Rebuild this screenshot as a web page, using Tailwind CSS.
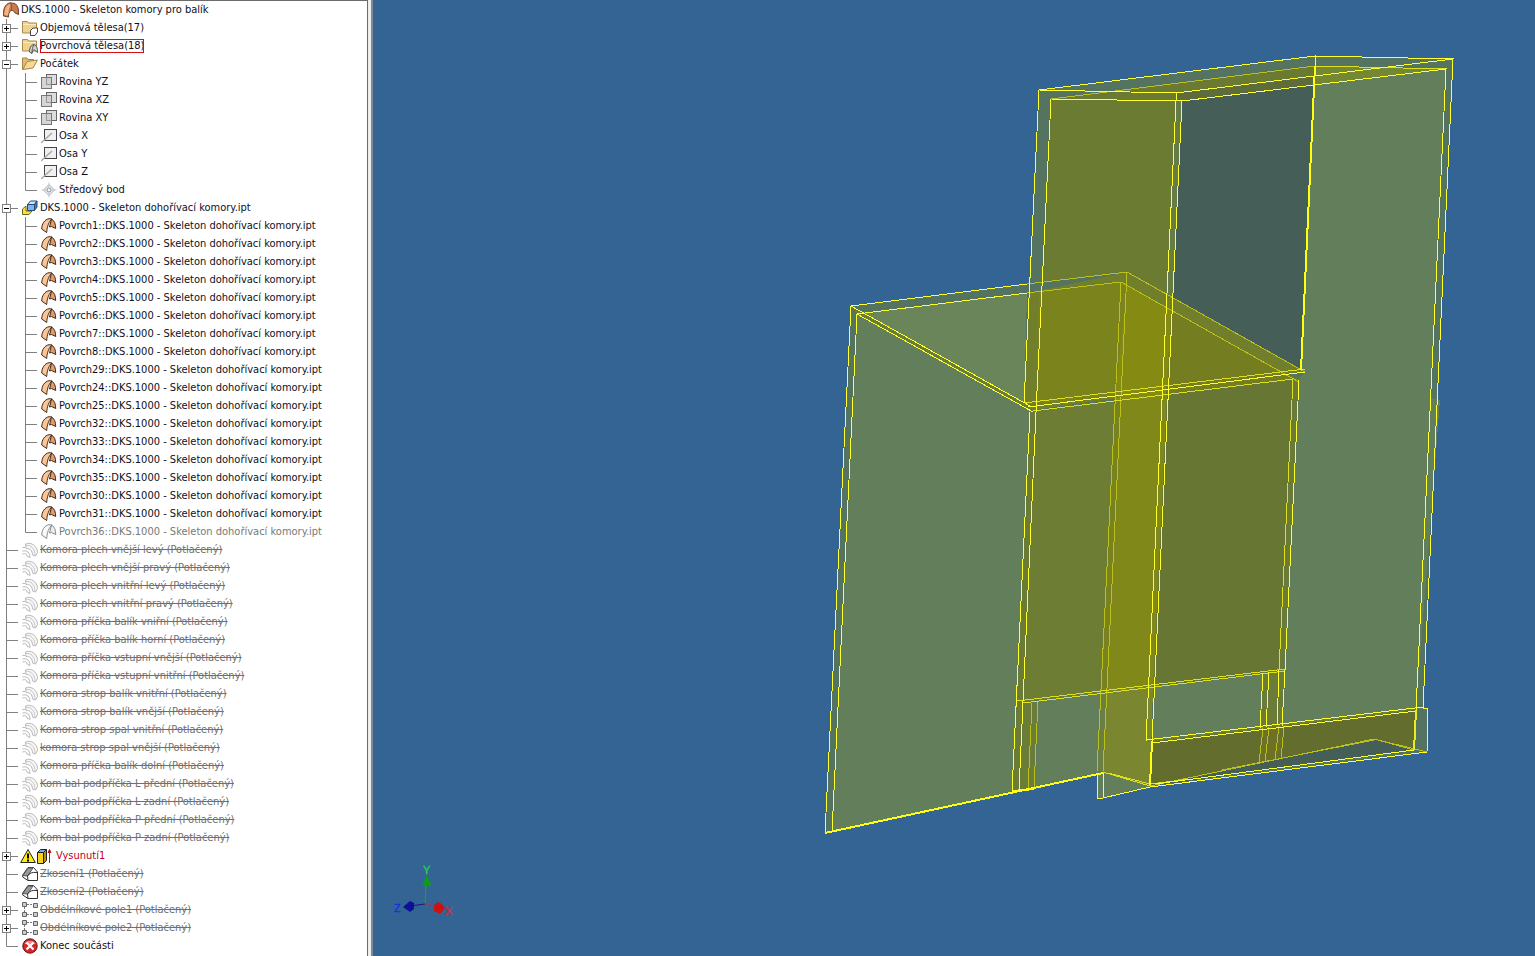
<!DOCTYPE html>
<html lang="cs">
<head>
    <meta charset="UTF-8">
    <meta name="viewport" content="width=device-width, initial-scale=1">
    <title>DKS.1000 - Skeleton komory pro balík</title>
    <script src="https://cdn.jsdelivr.net/npm/@tailwindcss/browser@4"></script>
</head>
<body class="flex min-h-screen bg-[#336494] font-['DejaVu_Sans_Condensed','DejaVu_Sans',sans-serif] text-[11px] leading-[18px] text-[#10101c]">

    <!-- Icons -->
    <svg class="hidden">
        <!-- tree guides -->
        <symbol id="pass" viewBox="0 0 19 18"><path d="M6.5 0V18" stroke="#808080"/></symbol>
        <symbol id="tee" viewBox="0 0 22 18"><path d="M6.5 0V18M6 9.500H18" stroke="#808080"/></symbol>
        <symbol id="end" viewBox="0 0 22 18"><path d="M6.5 0V9.500H18" fill="none" stroke="#808080"/></symbol>
        <symbol id="plus" viewBox="0 0 22 18"><path d="M6.5 0V18M6 9.500H18" stroke="#808080"/><rect x="2.500" y="5.500" width="8" height="8" fill="#fff" stroke="#808080"/><path d="M4 9.500H9M6.500 7V12" stroke="#000"/></symbol>
        <symbol id="minus" viewBox="0 0 22 18"><path d="M6.5 0V18M6 9.500H18" stroke="#808080"/><rect x="2.500" y="5.500" width="8" height="8" fill="#fff" stroke="#808080"/><path d="M4 9.500H9" stroke="#000"/></symbol>

        <symbol id="part" viewBox="0 0 16 16"><path d="M.5 14C0 7 2 2 7 .8L12 1.500C15 3.500 16 8 15.500 12.500L12 11C11 9 9.500 8 8 8.500C6 9.500 5.500 12 5.500 15Z" fill="#c97b4e" stroke="#6d4530"/><path d="M1.500 13C1.500 7 3 3 7.500 2L6 7.500L5 13.500Z" fill="#f3b283"/><path d="M7.500 1.500C9 3 9 6 8 8" stroke="#8a5235" fill="none"/></symbol>
        <symbol id="surface" viewBox="0 0 16 16"><path d="M10.500 1C13.500 2.500 14.700 6 14.700 10.500L10.500 8.500L8.500 9Z" fill="#e39a66" stroke="#3f2a1c" stroke-linejoin="round"/><path d="M.7 11C.8 6 3.500 1.500 8 .7L11 1C8 3.500 6 8.500 5.700 14.500Z" fill="#fbc697" stroke="#3f2a1c" stroke-linejoin="round"/></symbol>
        <symbol id="surface-off" viewBox="0 0 16 16"><path d="M10.500 1C13.500 2.500 14.700 6 14.700 10.500L10.500 8.500L8.500 9Z" fill="#eee" stroke="#8a8a8a" stroke-linejoin="round"/><path d="M.7 11C.8 6 3.500 1.500 8 .7L11 1C8 3.500 6 8.500 5.700 14.500Z" fill="#f8f8f8" stroke="#8a8a8a" stroke-linejoin="round"/></symbol>
        <symbol id="solids" viewBox="0 0 16 16"><path d="M.5 13V1.500H5.500L6.500 3H14.500V13Z" fill="#f1d28b" stroke="#a88a4c"/><path d="M1 4.500H14" stroke="#fbebc0"/><path d="M8.500 10.500L11 8H15.500V12L13 15.500H8.500Z" fill="#fff" stroke="#444"/></symbol>
        <symbol id="surfaces" viewBox="0 0 16 16"><path d="M.5 13V1.500H5.500L6.500 3H14.500V13Z" fill="#f1d28b" stroke="#a88a4c"/><path d="M1 4.500H14" stroke="#fbebc0"/><path d="M7.500 14C7.500 9.500 9 7 12 6.500C15 7.500 15.500 10 15.500 14.500L12.500 12C11 12 10.500 13 10 15.500Z" fill="#ccd3dc" stroke="#555"/><path d="M12 7C10.500 9 10 12 10 15" stroke="#555" fill="none"/></symbol>
        <symbol id="folder" viewBox="0 0 16 16"><path d="M.5 13.500V2H5L6 3.500H11.500V6" fill="#e2bd72" stroke="#a38347"/><path d="M.8 13.500L5 5.500L15.500 4L11 12Z" fill="#f6d995" stroke="#a38347"/></symbol>
        <symbol id="plane" viewBox="0 0 16 16"><rect x="5.500" y=".5" width="10" height="10" fill="#ddd" stroke="#666"/><rect x=".5" y="3.500" width="10" height="11" fill="#cfcfcf" fill-opacity=".85" stroke="#777"/><path d="M5.500 4V10.500H10" stroke="#999" fill="none"/></symbol>
        <symbol id="axis" viewBox="0 0 16 16"><rect x="3.500" y="1.500" width="12" height="11" fill="#f0f0f2" stroke="#444"/><path d="M0 15L11 5" stroke="#aaa" stroke-width="1.500"/></symbol>
        <symbol id="point" viewBox="0 0 16 16"><path d="M8 2.500L13.500 8L8 13.500L2.500 8Z" fill="#e9edf1" stroke="#a9afb5"/><path d="M8 .5V5M8 11V15.500M.5 8H5M11 8H15.500" stroke="#c4c8cc"/><circle cx="8" cy="8" r="2" fill="#fff" stroke="#8a9098"/></symbol>
        <symbol id="derived" viewBox="0 0 16 16"><path d="M.5 14.500V9L4 6V11H10L7 14.500Z" fill="#f8e23a" stroke="#6b6420"/><path d="M5.500 4.500L8.500 1H15L12.500 4.500Z" fill="#cfe6fa" stroke="#234a78"/><path d="M5.500 4.500H12.500V10.500H5.500Z" fill="#7fb4e6" stroke="#234a78"/><path d="M12.500 4.500L15 1V7L12.500 10.500Z" fill="#3f78b8" stroke="#234a78"/></symbol>
        <symbol id="thicken" viewBox="0 0 16 16"><path d="M3.500 2C9-.5 15.500 4 15.500 10.500L13.500 14L10.500 13C10.500 8.500 7.500 6 4 6.500Z" fill="#f7f7f7" stroke="#b8b8b8"/><path d="M4 3.500C9 2.500 13 7 13 13.500" stroke="#c8c8c8" fill="none"/><path d="M.5 5.500H3M.5 9C5 8 8 10.500 8 15.500L5 14C5 12 3.500 11 .5 12" stroke="#b8b8b8" fill="none"/></symbol>
        <symbol id="warning" viewBox="0 0 16 16"><path d="M8 1.500L15.300 14.500H.7Z" fill="#ffee00" stroke="#222" stroke-linejoin="round"/><path d="M8 5.500V10.500M8 11.500V13.500" stroke="#000" stroke-width="2"/></symbol>
        <symbol id="extrude" viewBox="0 0 16 16"><path d="M1.500 4.500H7.500V15.500H1.500Z" fill="#f5d322" stroke="#222"/><path d="M7.500 4.500L10.500 1.500V12.500L7.500 15.500Z" fill="#b38f10" stroke="#222"/><path d="M1.500 4.500L4.500 1.500H10.500L7.500 4.500Z" fill="#7fb0d8" stroke="#222"/><path d="M13.500 15V3M12 4.500L13.500 1.500L15 4.500Z" stroke="#c01818" fill="#c01818"/></symbol>
        <symbol id="chamfer" viewBox="0 0 16 16"><path d="M.7 9L6 1.500H11.500L15.500 6V14.500H6L.7 11Z" fill="#fff" stroke="#333"/><path d="M1 9.500L6 2H11L5.500 10Z" fill="#999" stroke="#555"/><path d="M5.500 10C7.500 7 10 6 15 6.500M5.500 10L6 14.500" stroke="#333" fill="none"/></symbol>
        <symbol id="pattern" viewBox="0 0 16 16"><path d="M5 2.500H11M5 12.500H11M2.500 5V10" stroke="#777" stroke-dasharray="2 1"/><path d="M.5 .5H4.500V4.500H.5ZM11.500 1.500H15.500V5.500H11.500ZM.5 10.500H4.500V14.500H.5ZM11.500 10.500H15.500V14.500H11.500Z" fill="#ccc" stroke="#666"/></symbol>
        <symbol id="stop" viewBox="0 0 16 16"><circle cx="8" cy="8" r="7.200" fill="#d8252c" stroke="#5e1418"/><path d="M2.500 6C4 1.500 12 1.500 13.500 6" fill="#f08a8a"/><path d="M4.500 4.500L11.500 11.500M11.500 4.500L4.500 11.500" stroke="#fff" stroke-width="2.200"/></symbol>
    </svg>

    <!-- Model browser -->
    <aside class="w-[368px] shrink-0 border-t border-r border-[#6b6b6b] bg-white">
        <ul id="tree"></ul>
    </aside>
    <div class="w-[5px] shrink-0 border-r-2 border-[#7f8a96] bg-[#eceef0]"></div>

    <!-- Viewport -->
    <main class="min-w-0 flex-1">
        <svg class="block w-full" viewBox="373 0 1162 956" fill="none" shape-rendering="crispEdges" role="img" aria-label="3D model">
            <!-- tall box -->
            <path d="M1039 90L1315 56L1453 59L1423 708H1428L1427 752L1150 787L1097 799V773L1024 403Z" fill="#557361"/>
            <path d="M1182 101L1446 69L1416 710L1152 741Z" fill="#627e5a"/>
            <path d="M1182 101L1315 85L1301 369L1172 298Z" fill="#455f58"/>
            <path d="M1051 99L1315 66V85L1182 101Z" fill="#6b7a32"/>
            <path d="M1176 93L1315 76V85L1182 101H1176Z" fill="#5d6c3a"/>
            <path d="M1315 66L1446 69L1315 85Z" fill="#748735"/>
            <path d="M1051 99L1182 101L1168 395L1036 412Z" fill="#6b7b31"/>
            <path d="M1176 101H1182L1170 330H1164Z" fill="#667b45"/>

            <!-- low box -->
            <path d="M851 306L1127 272L1305 372L1281 760L1103 773L825 833Z" fill="#557361"/>
            <path d="M857 314L1027 293L1024 403L1030 406Z" fill="#698559"/>
            <path d="M857 314L1033 412L1012 791L832 832Z" fill="#627e5a"/>
            <path d="M851 306L857 314L1033 412L1030 406Z" fill="#6b7d35"/>
            <path d="M1029 293L1127 272L1305 372L1033 410L1024 403Z" fill="#717e2c"/>
            <path d="M1039 292L1121 282L1299 380L1036 404Z" fill="#7b831d"/>
            <path d="M1172 310L1299 380L1167 394Z" fill="#747d20"/>
            <path d="M1127 285L1171 310L1166 395L1115 400Z" fill="#858a12"/>
            <path d="M1030 412L1293 379L1299 378L1285 670L1017 703Z" fill="#6b7b35"/>
            <path d="M1036 412L1115 401L1101 692L1023 701Z" fill="#6d7d33"/>
            <path d="M1167 394L1293 379L1279 670L1154 687Z" fill="#677632"/>
            <path d="M1121 400L1167 394L1153 687L1107 692Z" fill="#80881a"/>
            <path d="M1115 401H1121L1107 692H1101Z" fill="#78821f"/>
            <path d="M1299 378L1305 372L1440 400L1416 710L1281 726Z" fill="#627e5a"/>
            <path d="M1017 703L1101 692L1097 773L1012 791Z" fill="#627e5a"/>
            <path d="M1017 703H1038L1034 788L1012 792Z" fill="#6b7b38"/>
            <path d="M1101 692L1153 686L1150 787L1103 773H1097Z" fill="#7a8730"/>
            <path d="M1101 692H1107L1103 773H1097Z" fill="#6c7f42"/>
            <path d="M1154 687L1285 671L1281 726L1152 741Z" fill="#627e5a"/>
            <path d="M1263 673L1285 670L1281 726L1260 728Z" fill="#6b7b38"/>
            <path d="M1034 788L1103 773L1104 773L1103 799H1097V800L1034 812Z" fill="#336494"/>
            <path d="M1097 773H1103L1150 787L1097 799Z" fill="#627e5a"/>

            <!-- plinth -->
            <path d="M1146 741L1423 708L1416 712L1152 743Z" fill="#6b7b38"/>
            <path d="M1152 742L1416 710L1414 750L1150 786Z" fill="#636e2e"/>
            <path d="M1262 729L1283 726L1279 760L1259 763Z" fill="#6d7126"/>
            <path d="M1200 776L1374 739L1414 750L1150 786Z" fill="#455f58"/>
            <path d="M1416 709L1428 708L1427 752L1414 750Z" fill="#557361"/>

            <!-- hidden edges -->
            <g stroke="#bcc11a">
                <path d="M1027 284L1127 272L1305 372M1027 293L1121 282L1299 382"/>
                <path d="M1121 282L1097 771M1127 272L1103 771"/>
                <path d="M1032 703L1028 790M1038 701L1034 788"/>
                <path d="M1263 728L1259 763M1269 727L1265 762M1279 726L1275 760M1284 726L1281 759"/>
                <path d="M1150 786L1374 739L1414 750M1374 739L1427 752M1222 770L1374 740"/>
                <path d="M1051 99L1315 66L1446 69"/>
            </g>
            <g stroke="#dde01c">
                <path d="M1017 701L1285 669M1023 703L1285 671"/>
                <path d="M1103 772L1150 786M1108 773L1150 784M1150 784L1190 779"/>
                <path d="M1024 403L1305 369M1033 411L1293 379L1279 670"/>
                <path d="M1315 66L1446 69"/>
            </g>

            <!-- visible edges -->
            <g stroke="#ffff2a">
                <path d="M851 306L1027 284M857 314L1027 293M851 306L825 833M857 314L832 832"/>
                <path d="M851 306L1030 406M857 314L1033 412"/>
                <path d="M1028 407L1305 372"/>
                <path d="M1030 412L1012 791M1036 412L1019 791"/>
                <path d="M1039 90L1315 56L1453 59L1423 708M1039 90L1176 93L1453 59"/>
                <path d="M1051 99L1182 101L1446 69L1416 710M1039 90L1024 403M1051 99L1036 412"/>
                <path d="M1176 93V101L1146 741M1182 101L1152 741"/>
                <path d="M1315 56V66M1299 380L1285 670"/>
                <path d="M1263 673L1260 728M1269 672L1266 727M1279 670L1277 726M1285 670L1282 726"/>
                <path d="M1146 740L1423 707M1152 743L1416 711M1423 708H1428L1427 752L1150 787M1155 784L1414 750"/>
                <path d="M1097 773V799L1103 798V773M1103 798L1150 787"/>
            </g>
            <g stroke="#ffff10" stroke-width="2">
                <path d="M1315 66L1301 370M1152 741L1150 785M825 833L1103 773M1013 791L1034 789"/>
                <path d="M1416 710L1414 750" stroke="#e8ec20"/>
            </g>

            <!-- axis triad -->
            <g shape-rendering="auto">
                <path d="M426 885L425 905" stroke="#18a828"/>
                <path d="M425 904L438 907" stroke="#b03040"/>
                <path d="M425 904L410 906" stroke="#101890"/>
                <path d="M427 875L432 886H422Z" fill="#0f9a1c"/>
                <path d="M403 907L410 901L414 903V909L410 912Z" fill="#0c1196"/>
                <path d="M434 905L438 902L442 904L445 908L440 914L434 911Z" fill="#cc1111"/>
                <g font-family="Liberation Sans, sans-serif" font-size="11">
                    <text x="423" y="874" fill="#20d850" stroke="#20d850" stroke-width=".3">Y</text>
                    <text x="394" y="912" fill="#1a2ce0" stroke="#1a2ce0" stroke-width=".3">Z</text>
                    <text x="445" y="915" fill="#e02030" stroke="#e02030" stroke-width=".3">X</text>
                </g>
            </g>
        </svg>
    </main>

    <script>
        const ipt = "::DKS.1000 - Skeleton dohořívací komory.ipt";

        // [guide, icon, label, style, level]
        const rows = [
            ["", "part", "DKS.1000 - Skeleton komory pro balík", "", 0],
            ["plus", "solids", "Objemová tělesa(17)", "", 1],
            ["plus", "surfaces", "Povrchová tělesa(18)", "boxed", 1],
            ["minus", "folder", "Počátek", "", 1],
            ["tee", "plane", "Rovina YZ", "", 2],
            ["tee", "plane", "Rovina XZ", "", 2],
            ["tee", "plane", "Rovina XY", "", 2],
            ["tee", "axis", "Osa X", "", 2],
            ["tee", "axis", "Osa Y", "", 2],
            ["tee", "axis", "Osa Z", "", 2],
            ["end", "point", "Středový bod", "", 2],
            ["minus", "derived", "DKS.1000 - Skeleton dohořívací komory.ipt", "", 1],
            ...[1, 2, 3, 4, 5, 6, 7, 8, 29, 24, 25, 32, 33, 34, 35, 30, 31].map(n => ["tee", "surface", "Povrch" + n + ipt, "", 2]),
            ["end", "surface-off", "Povrch36" + ipt, "hiddenItem", 2],
            ...[
                "Komora plech vnější levý",
                "Komora plech vnější pravý",
                "Komora plech vnitřní levý",
                "Komora plech vnitřní pravý",
                "Komora příčka balík vniřní",
                "Komora příčka balík horní",
                "Komora příčka vstupní vnější",
                "Komora příčka vstupní vnitřní",
                "Komora strop balík vnitřní",
                "Komora strop balík vnější",
                "Komora strop spal vnitřní",
                "komora strop spal vnější",
                "Komora příčka balík dolní",
                "Kom bal podpříčka L přední",
                "Kom bal podpříčka L zadní",
                "Kom bal podpříčka P přední",
                "Kom bal podpříčka P zadní",
            ].map(name => ["tee", "thicken", name + " (Potlačený)", "off", 1]),
            ["plus", "extrude", "Vysunutí1", "error", 1],
            ["tee", "chamfer", "Zkosení1 (Potlačený)", "off", 1],
            ["tee", "chamfer", "Zkosení2 (Potlačený)", "off", 1],
            ["plus", "pattern", "Obdélníkové pole1 (Potlačený)", "off", 1],
            ["plus", "pattern", "Obdélníkové pole2 (Potlačený)", "off", 1],
            ["end", "stop", "Konec součásti", "", 1],
        ];

        const styles = {
            "": "ml-0.5",
            boxed: "ml-0.5 leading-[14px] outline -outline-offset-1 outline-[#d01010]",
            hiddenItem: "ml-0.5 text-[#787878]",
            off: "ml-0.5 text-[#707070] line-through",
            error: "ml-1 text-[#c00020]",
        };

        const icon = name => `<svg class="size-4 shrink-0"><use href="#${name}"/></svg>`;

        function guide(name) {
            const svg = `<svg class="block h-[18px] w-[22px] shrink-0"><use href="#${name}"/></svg>`;
            if (name === "plus") return `<button type="button" aria-label="Rozbalit">${svg}</button>`;
            if (name === "minus") return `<button type="button" aria-label="Sbalit">${svg}</button>`;
            return svg;
        }

        document.getElementById("tree").innerHTML = rows.map(([line, pic, label, style, level]) => `
            <li class="flex h-[18px] items-center whitespace-nowrap ${level === 0 ? "pl-[3px]" : ""}">
                ${level === 2 ? '<svg class="h-[18px] w-[19px] shrink-0"><use href="#pass"/></svg>' : ""}
                ${level ? guide(line) : ""}
                ${style === "error" ? '<span class="-ml-0.5 flex">' + icon("warning") + "</span>" : ""}
                ${icon(pic)}
                <span class="${styles[style]}">${label}</span>
            </li>`).join("");
    </script>
</body>
</html>
